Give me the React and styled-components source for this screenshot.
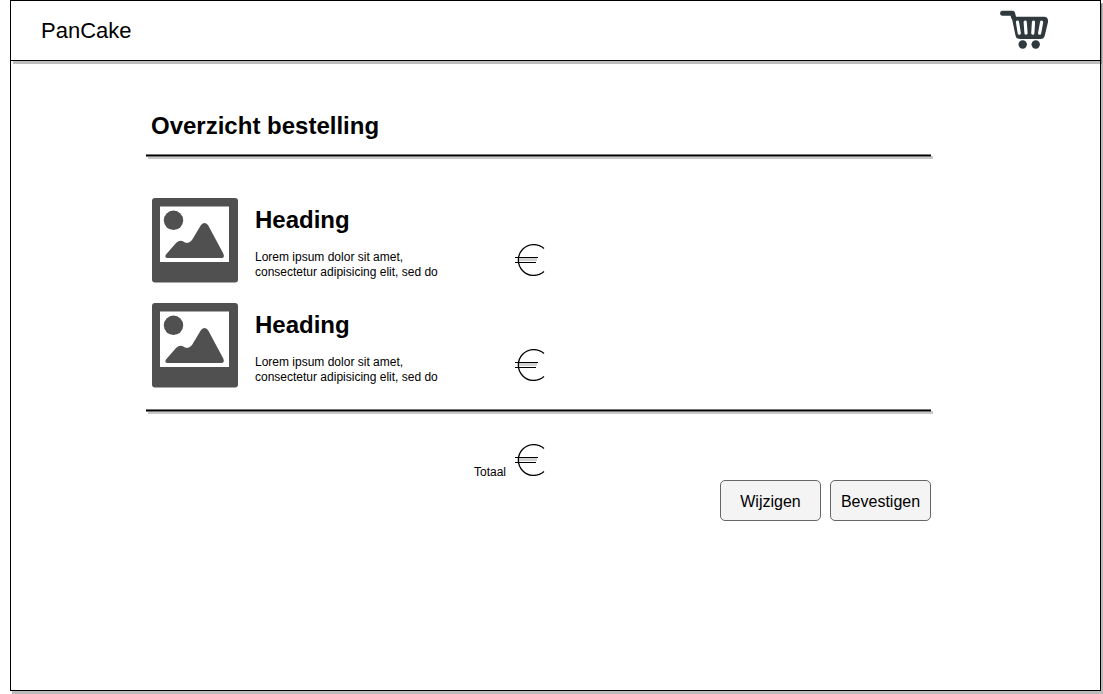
import React from 'react';
import styled, { createGlobalStyle } from 'styled-components';

const GlobalStyle = createGlobalStyle`
  * { box-sizing: border-box; }
  body {
    margin: 0;
    background: #fff;
    color: #000;
    font-family: "Liberation Sans", Arial, Helvetica, sans-serif;
  }
  h1, h2, p, ul { margin: 0; padding: 0; }
`;

const Frame = styled.div`
  margin: 0 2px 3px 10px;
  min-height: calc(100vh - 3px);
  border: 1px solid #000;
  box-shadow: 2px 3px 0 #bcbcbc;
`;

const Header = styled.header`
  display: flex;
  align-items: center;
  justify-content: space-between;
  height: 60px;
  padding: 0 50px 0 30px;
  border-bottom: 1px solid #000;
  box-shadow: 2px 3px 0 rgba(0, 0, 0, 0.26);
`;

const Brand = styled.span`
  font-size: 22px;
  line-height: 26px;
`;

const CartLink = styled.a`
  display: block;
  color: #30393d;
`;

const Main = styled.main`
  margin: 0 169px 0 135px;
  padding-top: 51px;
`;

const Title = styled.h1`
  padding: 0 5px 14px;
  font-size: 24px;
  line-height: 28px;
`;

const Rule = styled.hr`
  height: 3px;
  margin: 0;
  border: solid #777;
  border-width: 1px 0;
  background: #000;
  box-shadow: 2px 2px 0 #c8c8c8;
`;

const Items = styled.ul`
  display: flex;
  flex-direction: column;
  gap: 20px;
  padding: 41px 6px 21px;
  list-style: none;
`;

const Item = styled.li`
  display: grid;
  grid-template-columns: 86px 243px 30px;
  column-gap: 17px;
  height: 85px;
`;

const Details = styled.div`
  padding-top: 8px;
`;

const ItemName = styled.h2`
  margin-bottom: 16px;
  font-size: 24px;
  line-height: 28px;
`;

const Note = styled.p`
  width: 200px;
  font-size: 12px;
  line-height: 15px;
`;

const Price = styled.div`
  padding-top: 46px;
`;

const Total = styled.div`
  display: grid;
  grid-template-columns: 34px 30px;
  align-items: baseline;
  column-gap: 7px;
  padding: 32px 0 0 328px;
  font-size: 12px;
  line-height: 15px;
`;

const Actions = styled.div`
  display: flex;
  justify-content: flex-end;
  gap: 9px;
`;

const Button = styled.button`
  width: 101px;
  height: 41px;
  padding: 2px 0 0;
  border: 1px solid #666;
  border-radius: 5px;
  background: #f4f4f4;
  color: #000;
  font: 16px/20px "Liberation Sans", Arial, Helvetica, sans-serif;
`;

const Drawing = styled.svg`
  display: block;
`;

function Cart() {
  return (
    <Drawing width="50" height="41" viewBox="0 0 50 41" fill="currentColor" aria-hidden="true">
      <path
        d="M2.600 3.200H12.500L13.500 7"
        fill="none" stroke="currentColor" strokeWidth="5" strokeLinecap="round" strokeLinejoin="round"
      />
      <path d="M11 4L15.500 25.500Q16 29 20 29H40.500Q44 29 44.800 25.500L48 12Q48.500 6.700 44 6.700H15L14.500 3Z" />
      <path
        d="M17.500 12.200L19.300 23.200M25.200 12.200L26 23.200M33.500 12.200L32.800 23.200M41.600 12.200L39.600 23.200"
        fill="none" stroke="#fff" strokeWidth="3.200" strokeLinecap="round"
      />
      <circle cx="22.700" cy="34.500" r="4.200" />
      <circle cx="35.700" cy="34.500" r="4.200" />
    </Drawing>
  );
}

function Picture() {
  return (
    <Drawing width="86" height="85" viewBox="0 0 86 85" fill="#505050" aria-hidden="true">
      <rect width="86" height="84.500" rx="3" />
      <path fill="#fff" d="M8 8.500H77V64H8Z" />
      <circle cx="21.500" cy="22.300" r="9.700" />
      <path d="M14 56.500L24 45Q28.500 41 33 44.500Q37 46 40 42L49 27Q52.500 23 56 27L71 55Q73.500 60 69 60H16Q12 60 14 56.500Z" />
    </Drawing>
  );
}

function Euro() {
  return (
    <Drawing width="30" height="32" viewBox="0 0 30 32" fill="none" stroke="#000" aria-hidden="true">
      <path stroke="#d2d2d2" strokeWidth="3" d="M3 15.500H22" />
      <path d="M0 13.500H23M0 18.500H21" />
      <path strokeWidth="1.300" d="M29 4.500A15.400 15.400 0 1 0 29 27.500" />
    </Drawing>
  );
}

const items = [1, 2];

export default function App() {
  return (
    <>
      <GlobalStyle />
      <Frame>
        <Header>
          <Brand>PanCake</Brand>
          <CartLink href="#cart" aria-label="Winkelwagen"><Cart /></CartLink>
        </Header>
        <Main>
          <Title>Overzicht bestelling</Title>
          <Rule />
          <Items>
            {items.map((id) => (
              <Item key={id}>
                <Picture />
                <Details>
                  <ItemName>Heading</ItemName>
                  <Note>Lorem ipsum dolor sit amet, consectetur adipisicing elit, sed do</Note>
                </Details>
                <Price><Euro /></Price>
              </Item>
            ))}
          </Items>
          <Rule />
          <Total>
            <span>Totaal</span>
            <Euro />
          </Total>
          <Actions>
            <Button type="button">Wijzigen</Button>
            <Button type="button">Bevestigen</Button>
          </Actions>
        </Main>
      </Frame>
    </>
  );
}
